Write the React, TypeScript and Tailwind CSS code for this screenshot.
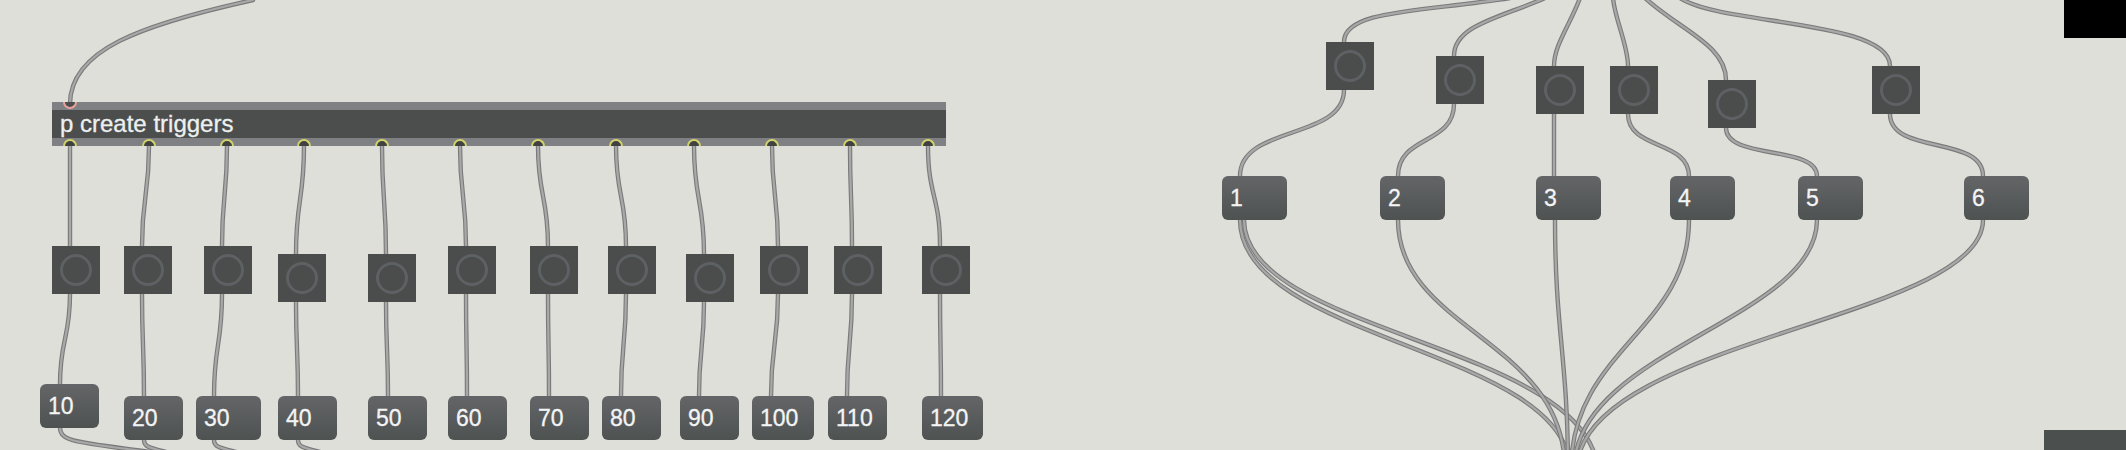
import React from "react"

// Max-style patcher canvas: nodes sit at their canvas coordinates, cables are drawn in one svg layer

type Msg = { label: string; cls: string }

const LEFT_BANGS = [
  "left-[52px] top-[246px]",
  "left-[124px] top-[246px]",
  "left-[204px] top-[246px]",
  "left-[278px] top-[254px]",
  "left-[368px] top-[254px]",
  "left-[448px] top-[246px]",
  "left-[530px] top-[246px]",
  "left-[608px] top-[246px]",
  "left-[686px] top-[254px]",
  "left-[760px] top-[246px]",
  "left-[834px] top-[246px]",
  "left-[922px] top-[246px]",
]

const RIGHT_BANGS = [
  "left-[1326px] top-[42px]",
  "left-[1436px] top-[56px]",
  "left-[1536px] top-[66px]",
  "left-[1610px] top-[66px]",
  "left-[1708px] top-[80px]",
  "left-[1872px] top-[66px]",
]

const LEFT_MSGS: Msg[] = [
  { label: "10", cls: "left-[40px] top-[384px] w-[59px]" },
  { label: "20", cls: "left-[124px] top-[396px] w-[59px]" },
  { label: "30", cls: "left-[196px] top-[396px] w-[65px]" },
  { label: "40", cls: "left-[278px] top-[396px] w-[59px]" },
  { label: "50", cls: "left-[368px] top-[396px] w-[59px]" },
  { label: "60", cls: "left-[448px] top-[396px] w-[59px]" },
  { label: "70", cls: "left-[530px] top-[396px] w-[59px]" },
  { label: "80", cls: "left-[602px] top-[396px] w-[59px]" },
  { label: "90", cls: "left-[680px] top-[396px] w-[59px]" },
  { label: "100", cls: "left-[752px] top-[396px] w-[62px]" },
  { label: "110", cls: "left-[828px] top-[396px] w-[59px]" },
  { label: "120", cls: "left-[922px] top-[396px] w-[61px]" },
]

const RIGHT_MSGS: Msg[] = [
  { label: "1", cls: "left-[1222px] top-[176px] w-[65px]" },
  { label: "2", cls: "left-[1380px] top-[176px] w-[65px]" },
  { label: "3", cls: "left-[1536px] top-[176px] w-[65px]" },
  { label: "4", cls: "left-[1670px] top-[176px] w-[65px]" },
  { label: "5", cls: "left-[1798px] top-[176px] w-[65px]" },
  { label: "6", cls: "left-[1964px] top-[176px] w-[65px]" },
]

// port coordinates for the cables
const OUTLETS = [70, 149, 227, 304, 382, 460, 538, 616, 694, 772, 850, 928]
const BANG_X = [70, 142, 222, 296, 386, 466, 548, 626, 704, 778, 852, 940]
const BANG_Y = [246, 246, 246, 254, 254, 246, 246, 246, 254, 246, 246, 246]
const MSG_X = [60, 144, 214, 298, 388, 467, 549, 621, 699, 771, 847, 941]
const MSG_Y = [384, 396, 396, 396, 396, 396, 396, 396, 396, 396, 396, 396]

const vcurve = (x1: number, y1: number, x2: number, y2: number) => {
  const m = (y1 + y2) / 2
  return `M${x1} ${y1} C${x1} ${m} ${x2} ${m} ${x2} ${y2}`
}

const CABLES: string[] = [
  // into the subpatcher inlet
  "M70 104 C70 50 140 25 253 0",
  ...OUTLETS.map((x, i) => vcurve(x, 146, BANG_X[i], BANG_Y[i])),
  ...BANG_X.map((x, i) => vcurve(x, BANG_Y[i] + 48, MSG_X[i], MSG_Y[i])),
  // left message outlets heading off-canvas
  "M60 427 C60 442 76 442 150 452 L210 462",
  "M144 440 C144 447 150 448 166 452 L190 460",
  "M214 440 C214 447 220 448 236 452 L260 460",
  "M298 440 C298 447 304 448 320 452 L344 460",
  // right: from above into the bangs
  "M1344 42 C1344 10 1420 12 1510 -2",
  "M1454 56 C1454 25 1500 18 1545 -2",
  "M1554 66 C1554 45 1570 25 1580 -2",
  "M1628 66 C1628 45 1615 20 1613 -2",
  "M1726 80 C1726 45 1680 30 1645 -2",
  "M1890 66 C1890 20 1720 25 1680 -2",
  // bangs into message boxes
  "M1344 90 C1344 140 1240 125 1240 176",
  "M1454 104 C1454 145 1398 135 1398 176",
  "M1554 114 L1554 176",
  "M1628 114 C1628 150 1689 140 1689 176",
  "M1726 128 C1726 160 1817 145 1817 176",
  "M1890 114 C1890 155 1983 135 1983 176",
  // message boxes down to the receiver below the frame
  "M1240 220 C1240 340 1570 350 1570 470",
  "M1244 220 C1244 335 1598 345 1598 475",
  "M1398 220 C1398 330 1565 340 1565 470",
  "M1555 220 C1555 330 1568 360 1568 470",
  "M1689 220 C1689 330 1571 350 1571 470",
  "M1817 220 C1817 320 1574 350 1574 470",
  "M1983 220 C1983 320 1577 340 1577 470",
]

function Cables() {
  return (
    <svg className="absolute inset-0" width={2126} height={450} viewBox="0 0 2126 450">
      {CABLES.map((d, i) => (
        <g key={i}>
          <path d={d} fill="none" stroke="#7a7a7a" strokeWidth={4.4} strokeLinecap="round" />
          <path d={d} fill="none" stroke="#a8a8a8" strokeWidth={2.2} strokeLinecap="round" />
        </g>
      ))}
    </svg>
  )
}

function Bang({ cls }: { cls: string }) {
  return (
    <div className={`absolute ${cls} w-[48px] h-[48px] bg-[#4a4d4c] flex items-center justify-center`}>
      <div className="w-[32px] h-[32px] rounded-full border-[3px] border-[#5e6163]" />
    </div>
  )
}

function Message({ label, cls }: Msg) {
  return (
    <div
      className={`absolute ${cls} h-[44px] rounded-[6px] bg-gradient-to-b from-[#646568] to-[#4e5251] flex items-center pl-[8px] text-[23px] text-[#f3f4f4] [-webkit-text-stroke:0.3px_#f3f4f4]`}
    >
      {label}
    </div>
  )
}

function Subpatcher() {
  return (
    <div className="absolute left-[52px] top-[102px] w-[894px] h-[44px] flex flex-col">
      <div className="h-[8px] bg-[#7f8084]" />
      <div className="h-[28px] bg-[#4b4e4d] flex items-center pl-[8px] text-[24px] leading-[28px] text-[#eef0f0] [-webkit-text-stroke:0.3px_#eef0f0]">
        p create triggers
      </div>
      <div className="h-[8px] bg-[#7f8084]" />
      {/* inlet */}
      <div className="absolute left-[11px] top-0 w-[14px] h-[7px] rounded-b-full border-2 border-t-0 border-[#e9a19b] bg-[#4b4e4d]" />
      {/* outlets */}
      <div className="absolute left-0 bottom-0 w-full flex">
        {OUTLETS.map((x, i) => (
          <div
            key={i}
            className="w-[14px] h-[7px] rounded-t-full border-2 border-b-0 border-[#d2d36b] bg-[#3f4241] shrink-0"
            style={{ marginLeft: i === 0 ? x - 52 - 7 : x - OUTLETS[i - 1] - 14 }}
          />
        ))}
      </div>
    </div>
  )
}

export default function App() {
  return (
    <div className="relative w-[2126px] h-[450px] overflow-hidden bg-[#dedfd9] font-['Liberation_Sans',Arial,sans-serif]">
      <Cables />
      <Subpatcher />
      {LEFT_BANGS.map((c, i) => (
        <Bang key={`lb${i}`} cls={c} />
      ))}
      {RIGHT_BANGS.map((c, i) => (
        <Bang key={`rb${i}`} cls={c} />
      ))}
      {LEFT_MSGS.map((m) => (
        <Message key={`lm${m.label}`} {...m} />
      ))}
      {RIGHT_MSGS.map((m) => (
        <Message key={`rm${m.label}`} {...m} />
      ))}
      {/* window fragments at the edges */}
      <div className="absolute right-0 top-0 w-[62px] h-[38px] bg-black" />
      <div className="absolute right-0 bottom-0 w-[82px] h-[20px] bg-[#4b4f4d]" />
    </div>
  )
}
